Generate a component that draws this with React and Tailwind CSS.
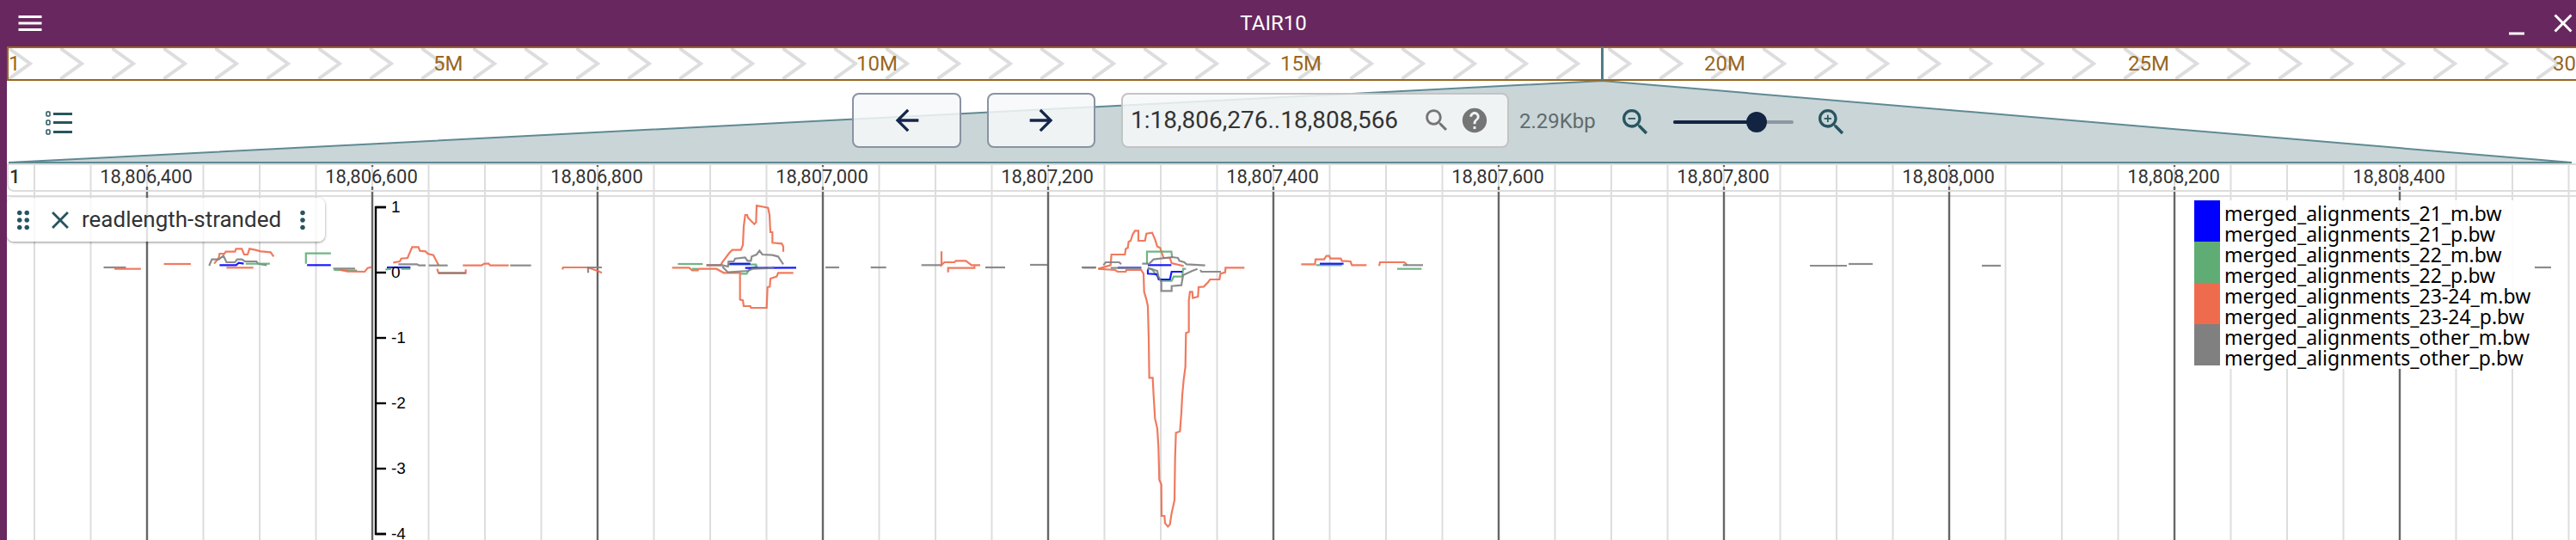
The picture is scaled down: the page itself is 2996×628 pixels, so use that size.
const RED = '#ee6c4d';
const GREEN = '#5fad75';
const BLUE = '#0000ff';
const GREY = '#808080';

const ICONS = {
  menu: 'M3 18h18v-2H3v2zm0-5h18v-2H3v2zm0-7v2h18V6H3z',
  back: 'M20 11H7.83l5.59-5.59L12 4l-8 8 8 8 1.41-1.41L7.83 13H20v-2z',
  forward: 'M12 4l-1.41 1.41L16.17 11H4v2h12.17l-5.58 5.59L12 20l8-8z',
  search:
    'M15.5 14h-.79l-.28-.27C15.41 12.59 16 11.11 16 9.5 16 5.91 13.09 3 9.5 3S3 5.91 3 9.5 5.91 16 9.5 16c1.61 0 3.09-.59 4.23-1.57l.27.28v.79l5 4.99L20.49 19l-4.99-5zm-6 0C7.01 14 5 11.99 5 9.5S7.01 5 9.5 5 14 7.01 14 9.5 11.99 14 9.5 14z',
  help: 'M12 2C6.48 2 2 6.48 2 12s4.48 10 10 10 10-4.48 10-10S17.52 2 12 2zm1 17h-2v-2h2v2zm2.07-7.75l-.9.92C13.45 12.9 13 13.5 13 15h-2v-.5c0-1.1.45-2.1 1.17-2.83l1.24-1.26c.37-.36.59-.86.59-1.41 0-1.1-.9-2-2-2s-2 .9-2 2H8c0-2.21 1.79-4 4-4s4 1.79 4 4c0 .88-.36 1.68-.93 2.25z',
  zoomOut:
    'M15.5 14h-.79l-.28-.27C15.41 12.59 16 11.11 16 9.5 16 5.91 13.09 3 9.5 3S3 5.91 3 9.5 5.91 16 9.5 16c1.61 0 3.09-.59 4.23-1.57l.27.28v.79l5 4.99L20.49 19l-4.99-5zm-6 0C7.01 14 5 11.99 5 9.5S7.01 5 9.5 5 14 7.01 14 9.5 11.99 14 9.5 14zM7 9h5v1H7z',
  zoomIn:
    'M15.5 14h-.79l-.28-.27C15.41 12.59 16 11.11 16 9.5 16 5.91 13.09 3 9.5 3S3 5.91 3 9.5 5.91 16 9.5 16c1.61 0 3.09-.59 4.23-1.57l.27.28v.79l5 4.99L20.49 19l-4.99-5zm-6 0C7.01 14 5 11.99 5 9.5S7.01 5 9.5 5 14 7.01 14 9.5 11.99 14 9.5 14zM12 10h-2v2H9v-2H7V9h2V7h1v2h2v1z',
  close:
    'M19 6.41 17.59 5 12 10.59 6.41 5 5 6.41 10.59 12 5 17.59 6.41 19 12 13.41 17.59 19 19 17.59 13.41 12z',
  minimize: 'M6 19h12v2H6z',
  drag: 'M11 18c0 1.1-.9 2-2 2s-2-.9-2-2 .9-2 2-2 2 .9 2 2zm-2-8c-1.1 0-2 .9-2 2s.9 2 2 2 2-.9 2-2-.9-2-2-2zm0-6c-1.1 0-2 .9-2 2s.9 2 2 2 2-.9 2-2-.9-2-2-2zm6 4c1.1 0 2-.9 2-2s-.9-2-2-2-2 .9-2 2 .9 2 2 2zm0 2c-1.1 0-2 .9-2 2s.9 2 2 2 2-.9 2-2-.9-2-2-2zm0 6c-1.1 0-2 .9-2 2s.9 2 2 2 2-.9 2-2-.9-2-2-2z',
  more: 'M12 8c1.1 0 2-.9 2-2s-.9-2-2-2-2 .9-2 2 .9 2 2 2zm0 2c-1.1 0-2 .9-2 2s.9 2 2 2 2-.9 2-2-.9-2-2-2zm0 6c-1.1 0-2 .9-2 2s.9 2 2 2 2-.9 2-2-.9-2-2-2z',
};

// Material-style 24 unit icon
function Icon({ name, size, className }) {
  return (
    <svg width={size} height={size} viewBox="0 0 24 24" fill="currentColor" className={className}>
      <path d={ICONS[name]} />
    </svg>
  );
}

// page x of each overview label, 5Mb apart
const OVERVIEW_LABELS = [
  ['1', 10],
  ['5M', 504],
  ['10M', 996],
  ['15M', 1489],
  ['20M', 1982],
  ['25M', 2475],
  ['30', 2969],
];

const RULER_LABELS = [
  ['18,806,400', 170],
  ['18,806,600', 432],
  ['18,806,800', 694],
  ['18,807,000', 956],
  ['18,807,200', 1218],
  ['18,807,400', 1480],
  ['18,807,600', 1742],
  ['18,807,800', 2004],
  ['18,808,000', 2266],
  ['18,808,200', 2528],
  ['18,808,400', 2790],
];

const GRID = Array.from({ length: 46 }, (_, k) => ({ x: 40 + 65.5 * k, major: k % 4 === 2 }));

const Y_TICKS = [
  ['1', 241],
  ['0', 317],
  ['-1', 393],
  ['-2', 469],
  ['-3', 545],
  ['-4', 621],
];

const LEGEND = [
  ['merged_alignments_21_m.bw', 'bg-[#0000ff]'],
  ['merged_alignments_21_p.bw', 'bg-[#0000ff]'],
  ['merged_alignments_22_m.bw', 'bg-[#5fad75]'],
  ['merged_alignments_22_p.bw', 'bg-[#5fad75]'],
  ['merged_alignments_23-24_m.bw', 'bg-[#ee6c4d]'],
  ['merged_alignments_23-24_p.bw', 'bg-[#ee6c4d]'],
  ['merged_alignments_other_m.bw', 'bg-[#808080]'],
  ['merged_alignments_other_p.bw', 'bg-[#808080]'],
];

// Wiggle traces, traced per region: ox/oy = region origin, sx/sy = units per page px.
const TRACES = [
  {
    ox: 0, oy: 210, sx: 2.24, sy: 3,
    lines: [
      [GREY, [[270, 303], [328, 303]]],
      [RED, [[298, 308], [367, 308]]],
      [RED, [[427, 291], [497, 291]]],
      [RED, [[558, 290], [570, 270], [572, 255], [585, 255], [588, 248], [612, 248], [615, 238], [630, 238], [636, 258], [645, 258], [650, 238], [665, 242], [680, 247], [705, 250], [713, 265]]],
      [GREY, [[545, 297], [552, 275], [570, 275], [582, 262], [590, 285], [612, 285], [618, 275], [630, 275], [638, 282], [668, 282], [672, 290], [695, 295]]],
      [BLUE, [[572, 295], [615, 295], [622, 287], [635, 290]]],
      [GREEN, [[640, 290], [703, 290]]],
      [RED, [[590, 304], [660, 304]]],
      [GREEN, [[797, 290], [797, 254], [862, 254]]],
      [BLUE, [[800, 295], [862, 295]]],
      [GREY, [[868, 307], [925, 307]]],
      [GREEN, [[870, 312], [930, 314]]],
      [RED, [[885, 310], [905, 317], [950, 318], [958, 305], [968, 302]]],
    ],
  },
  {
    ox: 400, oy: 230, sx: 3, sy: 3,
    lines: [
      [BLUE, [[150, 243], [232, 243]]],
      [GREEN, [[145, 250], [165, 248]]],
      [GREEN, [[200, 248], [232, 248]]],
      [RED, [[172, 226], [195, 222], [200, 212], [222, 210], [238, 172], [260, 172], [265, 185], [285, 187], [292, 195], [312, 200], [330, 235]]],
      [GREY, [[190, 232], [255, 232], [262, 236], [285, 236]]],
      [GREY, [[296, 236], [362, 236]]],
      [RED, [[325, 248], [330, 262], [425, 262], [425, 250]]],
      [GREY, [[330, 263], [425, 263]]],
      [RED, [[415, 236], [480, 236], [490, 230], [505, 230], [510, 236], [575, 236]]],
      [GREY, [[580, 236], [653, 236]]],
      [RED, [[762, 250], [765, 243], [850, 243], [885, 255], [900, 262]]],
      [GREY, [[852, 262], [852, 243], [900, 243]]],
    ],
  },
  {
    ox: 740, oy: 220, sx: 3, sy: 3,
    lines: [
      [GREEN, [[145, 261], [232, 261]]],
      [RED, [[125, 274], [185, 274], [195, 283], [215, 283], [218, 278], [280, 278], [305, 292], [362, 292], [362, 385], [372, 388], [375, 408], [398, 408], [400, 414], [455, 414], [458, 342], [466, 340], [468, 312], [490, 305], [495, 292], [548, 292]]],
      [RED, [[245, 265], [295, 265], [300, 255], [325, 222], [335, 212], [365, 212], [372, 195], [375, 130], [380, 90], [387, 90], [390, 100], [412, 122], [418, 115], [420, 57], [460, 65], [465, 90], [468, 150], [475, 150], [475, 187], [508, 190], [513, 200], [513, 218]]],
      [GREEN, [[195, 278], [215, 278]]],
      [GREEN, [[320, 263], [418, 263], [420, 270], [395, 278], [385, 295], [365, 295]]],
      [BLUE, [[325, 260], [398, 260]]],
      [BLUE, [[380, 275], [558, 274]]],
      [GREY, [[245, 265], [300, 265], [320, 270], [322, 252], [340, 252], [345, 242], [380, 238], [388, 250], [400, 250], [403, 235], [420, 228], [430, 215], [440, 228], [475, 230], [495, 235], [508, 255], [513, 262]]],
      [GREY, [[300, 270], [320, 290], [390, 285], [405, 278], [460, 276], [480, 272]]],
      [GREY, [[660, 273], [708, 273]]],
      [GREY, [[818, 273], [872, 273]]],
      [GREY, [[995, 265], [1065, 265]]],
      [RED, [[1065, 217], [1065, 265], [1075, 255], [1110, 255], [1115, 250], [1150, 250], [1170, 265], [1200, 265]]],
      [RED, [[1088, 290], [1088, 275], [1180, 275], [1180, 268]]],
    ],
  },
  {
    ox: 0, oy: 0, sx: 1, sy: 1,
    lines: [
      [GREY, [[1146, 311], [1169, 311]]],
      [GREY, [[1198, 308], [1218, 308]]],
      [GREY, [[1258, 311], [1275, 311]]],
      [GREY, [[2105, 309], [2148, 309]]],
      [GREY, [[2150, 307], [2178, 307]]],
      [GREY, [[2305, 309], [2327, 309]]],
      [GREY, [[2948, 311], [2967, 311]]],
    ],
  },
  {
    ox: 1240, oy: 250, sx: 3, sy: 3,
    lines: [
      [RED, [[112, 188], [155, 175], [158, 138], [205, 138], [208, 118], [215, 115], [218, 93], [225, 90], [232, 68], [240, 55], [252, 55], [252, 90], [275, 90], [280, 65], [300, 62], [310, 85], [318, 110], [328, 115], [340, 150], [362, 150], [368, 168], [410, 178]]],
      [RED, [[112, 188], [170, 192], [180, 198], [208, 198], [210, 192], [262, 192], [270, 205], [272, 268], [280, 295], [285, 318], [288, 430], [290, 568], [302, 568], [305, 628], [310, 710], [318, 745], [322, 810], [325, 925], [332, 940], [333, 1050], [343, 1050], [345, 1075], [355, 1087], [362, 1080], [368, 1040], [378, 995], [380, 850], [383, 760], [397, 755], [402, 690], [405, 630], [410, 575], [416, 530], [418, 412], [428, 408], [428, 298], [432, 268], [440, 268], [442, 290], [460, 285], [462, 252], [480, 250], [495, 235], [502, 225], [535, 225], [538, 205], [555, 200], [556, 184], [622, 184]]],
      [GREEN, [[282, 172], [282, 128], [367, 128], [370, 150]]],
      [GREEN, [[284, 185], [300, 190], [322, 220], [335, 230], [368, 230], [375, 215], [405, 215], [408, 188], [418, 188]]],
      [BLUE, [[180, 184], [262, 184]]],
      [BLUE, [[285, 175], [367, 175]]],
      [BLUE, [[285, 190], [285, 205], [318, 207], [323, 225], [362, 225], [368, 198], [405, 198]]],
      [GREY, [[58, 184], [102, 184]]],
      [GREY, [[130, 175], [138, 165], [185, 165], [192, 172]]],
      [GREY, [[155, 185], [262, 185]]],
      [GREY, [[265, 170], [290, 170], [305, 155], [370, 147], [390, 150], [395, 160], [412, 165], [420, 172], [485, 176]]],
      [GREY, [[285, 185], [318, 195], [322, 215], [332, 235], [332, 265], [368, 265], [368, 248], [402, 245], [408, 210], [440, 195], [458, 188]]],
      [GREY, [[468, 192], [472, 198], [540, 198]]],
      [RED, [[820, 172], [868, 172], [870, 155], [900, 155], [908, 143], [918, 143], [922, 152], [958, 152], [962, 160], [992, 162], [997, 175], [1048, 175]]],
      [RED, [[1092, 178], [1095, 165], [1180, 165], [1190, 175]]],
      [GREEN, [[872, 175], [962, 175]]],
      [BLUE, [[885, 170], [968, 170]]],
      [GREEN, [[1155, 188], [1240, 188]]],
      [GREY, [[1175, 175], [1245, 175]]],
    ],
  },
];

function Overview() {
  return (
    <div className="relative ml-2 h-[40px] border-y-2 border-l-2 border-[#98661f] bg-white">
      <svg width="2986" height="36" className="block">
        <defs>
          <pattern id="chevrons" width="60" height="36" patternUnits="userSpaceOnUse">
            <path d="M0 0 L25 18 L0 36" fill="none" stroke="#dddddd" strokeWidth="4" />
          </pattern>
        </defs>
        <rect width="2986" height="36" fill="url(#chevrons)" />
      </svg>
      {OVERVIEW_LABELS.map(([label, x]) => (
        <span
          key={label}
          className="absolute top-[3px] text-[24px] leading-[30px] text-[#98661f]"
          style={{ left: x - 10 }}
        >
          {label}
        </span>
      ))}
      <div className="absolute -top-[2px] left-[1852px] h-[40px] w-[3px] bg-[#4f7d87]" />
    </div>
  );
}

function Toolbar() {
  return (
    <div className="relative ml-2 h-[96px] bg-white">
      <svg
        width="2988"
        height="96"
        viewBox="8 94 2988 96"
        className="absolute left-0 top-0"
      >
        <path
          d="M1864 94 L2991 189 L10 189 Z"
          fill="#c9d5d7"
          stroke="#5f8a93"
          strokeWidth="2"
        />
      </svg>
      <div className="relative flex items-start pt-[14px]">
        <svg width="31" height="28" viewBox="0 0 31 28" className="ml-[45px] mt-[21px] shrink-0 text-[#27555f]">
          <g fill="none" stroke="currentColor" strokeWidth="1.5">
            <rect x="1" y="1" width="4" height="5" rx="1" />
            <rect x="1" y="11" width="4" height="5" rx="1" />
            <rect x="1" y="22" width="4" height="5" rx="1" />
          </g>
          <g fill="currentColor">
            <rect x="9" y="2" width="22" height="3" />
            <rect x="9" y="12" width="22" height="3" />
            <rect x="9" y="23" width="22" height="3" />
          </g>
        </svg>
        <div className="ml-[907px] flex items-start text-[#14264a]">
          <button className="flex h-[64px] w-[127px] items-center justify-center rounded-lg border-2 border-[#8a93a3] bg-[#f6f8f9]/85">
            <Icon name="back" size={40} />
          </button>
          <button className="ml-[30px] flex h-[64px] w-[126px] items-center justify-center rounded-lg border-2 border-[#8a93a3] bg-[#f6f8f9]/85">
            <Icon name="forward" size={40} />
          </button>
          <div className="ml-[30px] flex h-[64px] w-[451px] items-center rounded-lg border-2 border-[#c3c3c3] bg-[#f6f8f9]/85 pl-[9px] pr-[21px]">
            <span className="flex-1 text-[28px] text-[#333333]">1:18,806,276..18,808,566</span>
            <Icon name="search" size={34} className="text-[#757575]" />
            <Icon name="help" size={34} className="ml-[10px] text-[#757575]" />
          </div>
          <span className="ml-[12px] mt-[18px] text-[24px] leading-[30px] text-[#5f6b6d]">2.29Kbp</span>
          <Icon name="zoomOut" size={40} className="ml-[26px] mt-[14px] text-[#27555f]" />
          <div className="relative ml-[24px] mt-[32px] h-[4px] w-[140px] rounded-full bg-[#8d96a3]">
            <div className="h-full w-[97px] rounded-full bg-[#132442]" />
            <div className="absolute left-[85px] -top-[10px] h-[24px] w-[24px] rounded-full bg-[#132442]" />
          </div>
          <Icon name="zoomIn" size={40} className="ml-[24px] mt-[14px] text-[#27555f]" />
        </div>
      </div>
    </div>
  );
}

function Plot() {
  return (
    <svg width="2988" height="438" viewBox="8 190 2988 438" className="absolute left-0 top-0">
      {GRID.map(({ x }) => (
        <line key={x} x1={x} x2={x} y1="190" y2="628" stroke="#dddddd" strokeWidth="2" />
      ))}
      {GRID.filter((g) => g.major).map(({ x }) => (
        <g key={x} stroke="#666666" strokeWidth="2.4">
          <line x1={x} x2={x} y1="190" y2="194" />
          <line x1={x} x2={x} y1="217" y2="628" />
        </g>
      ))}
      {TRACES.map(({ ox, oy, sx, sy, lines }) =>
        lines.map(([color, points], i) => (
          <polyline
            key={`${ox}-${i}`}
            points={points.map(([x, y]) => `${ox + x / sx},${oy + y / sy}`).join(' ')}
            fill="none"
            stroke={color}
            strokeWidth="2.2"
            opacity="0.9"
          />
        )),
      )}
      <path d="M449 241 H437 V621 H449" fill="none" stroke="#000000" strokeWidth="2.4" />
      {Y_TICKS.map(([label, y]) => (
        <g key={label}>
          <line x1="437" x2="449" y1={y} y2={y} stroke="#000000" strokeWidth="2.4" />
          <text
            x="455"
            y={y + 6}
            fontSize="19"
            fontFamily="'Liberation Sans', sans-serif"
            fill="#000000"
          >
            {label}
          </text>
        </g>
      ))}
    </svg>
  );
}

function TrackLabel() {
  return (
    <div className="relative ml-0 mt-px flex h-[51px] w-[370px] items-center rounded-lg bg-white/80 pl-[2px] shadow-[0_1px_3px_rgba(0,0,0,0.45)]">
      <Icon name="drag" size={34} className="shrink-0 text-[#27555f]" />
      <Icon name="close" size={34} className="ml-[9px] shrink-0 text-[#27555f]" />
      <span className="ml-[8px] w-[231px] whitespace-nowrap text-[26px] text-[#333333]">readlength-stranded</span>
      <Icon name="more" size={34} className="ml-[9px] shrink-0 text-[#27555f]" />
    </div>
  );
}

function Legend() {
  return (
    <div className="absolute left-[2544px] top-[3px] w-[393px] bg-white/90 pb-[4px]">
      {LEGEND.map(([name, color]) => (
        <div key={name} className="flex h-[24px]">
          <div className={`w-[30px] shrink-0 ${color}`} />
          <span className="relative top-[3px] ml-[5px] whitespace-nowrap font-['Noto_Sans',sans-serif] text-[23px] leading-[24px] text-black">{name}</span>
        </div>
      ))}
    </div>
  );
}

export default function App() {
  return (
    <div className="h-[628px] w-full overflow-hidden bg-[#68275f] font-['Roboto',sans-serif]">
      <header className="flex h-[54px] items-center text-white">
        <div className="flex w-[60px] shrink-0 items-center pl-[17px]">
          <Icon name="menu" size={36} />
        </div>
        <div className="flex-1 text-center text-[24px] leading-[30px]">TAIR10</div>
        <div className="flex w-[94px] shrink-0 items-center pl-[7px]">
          <Icon name="minimize" size={36} className="shrink-0" />
          <Icon name="close" size={36} className="ml-[18px] shrink-0" />
        </div>
      </header>
      <Overview />
      <Toolbar />
      <div className="relative ml-2 h-[438px] overflow-hidden bg-white">
        <Plot />
        <div className="relative flex h-[33px] border-t-2 border-[#dddddd]">
          <div className="absolute inset-x-0 -top-[2px] h-[33px] rounded-bl-lg border-b-2 border-l-2 border-[#dddddd]" />
          <span className="absolute left-[3px] top-px text-[22px] font-medium leading-[26px] text-[#333333]">1</span>
          {RULER_LABELS.map(([label, x]) => (
            <span
              key={label}
              className="absolute top-px -translate-x-1/2 text-[22px] leading-[26px] text-[#333333]"
              style={{ left: x - 8 }}
            >
              {label}
            </span>
          ))}
        </div>
        <div className="h-[6px] border-b-2 border-[#dddddd]" />
        <div className="relative">
          <TrackLabel />
          <Legend />
        </div>
      </div>
    </div>
  );
}
